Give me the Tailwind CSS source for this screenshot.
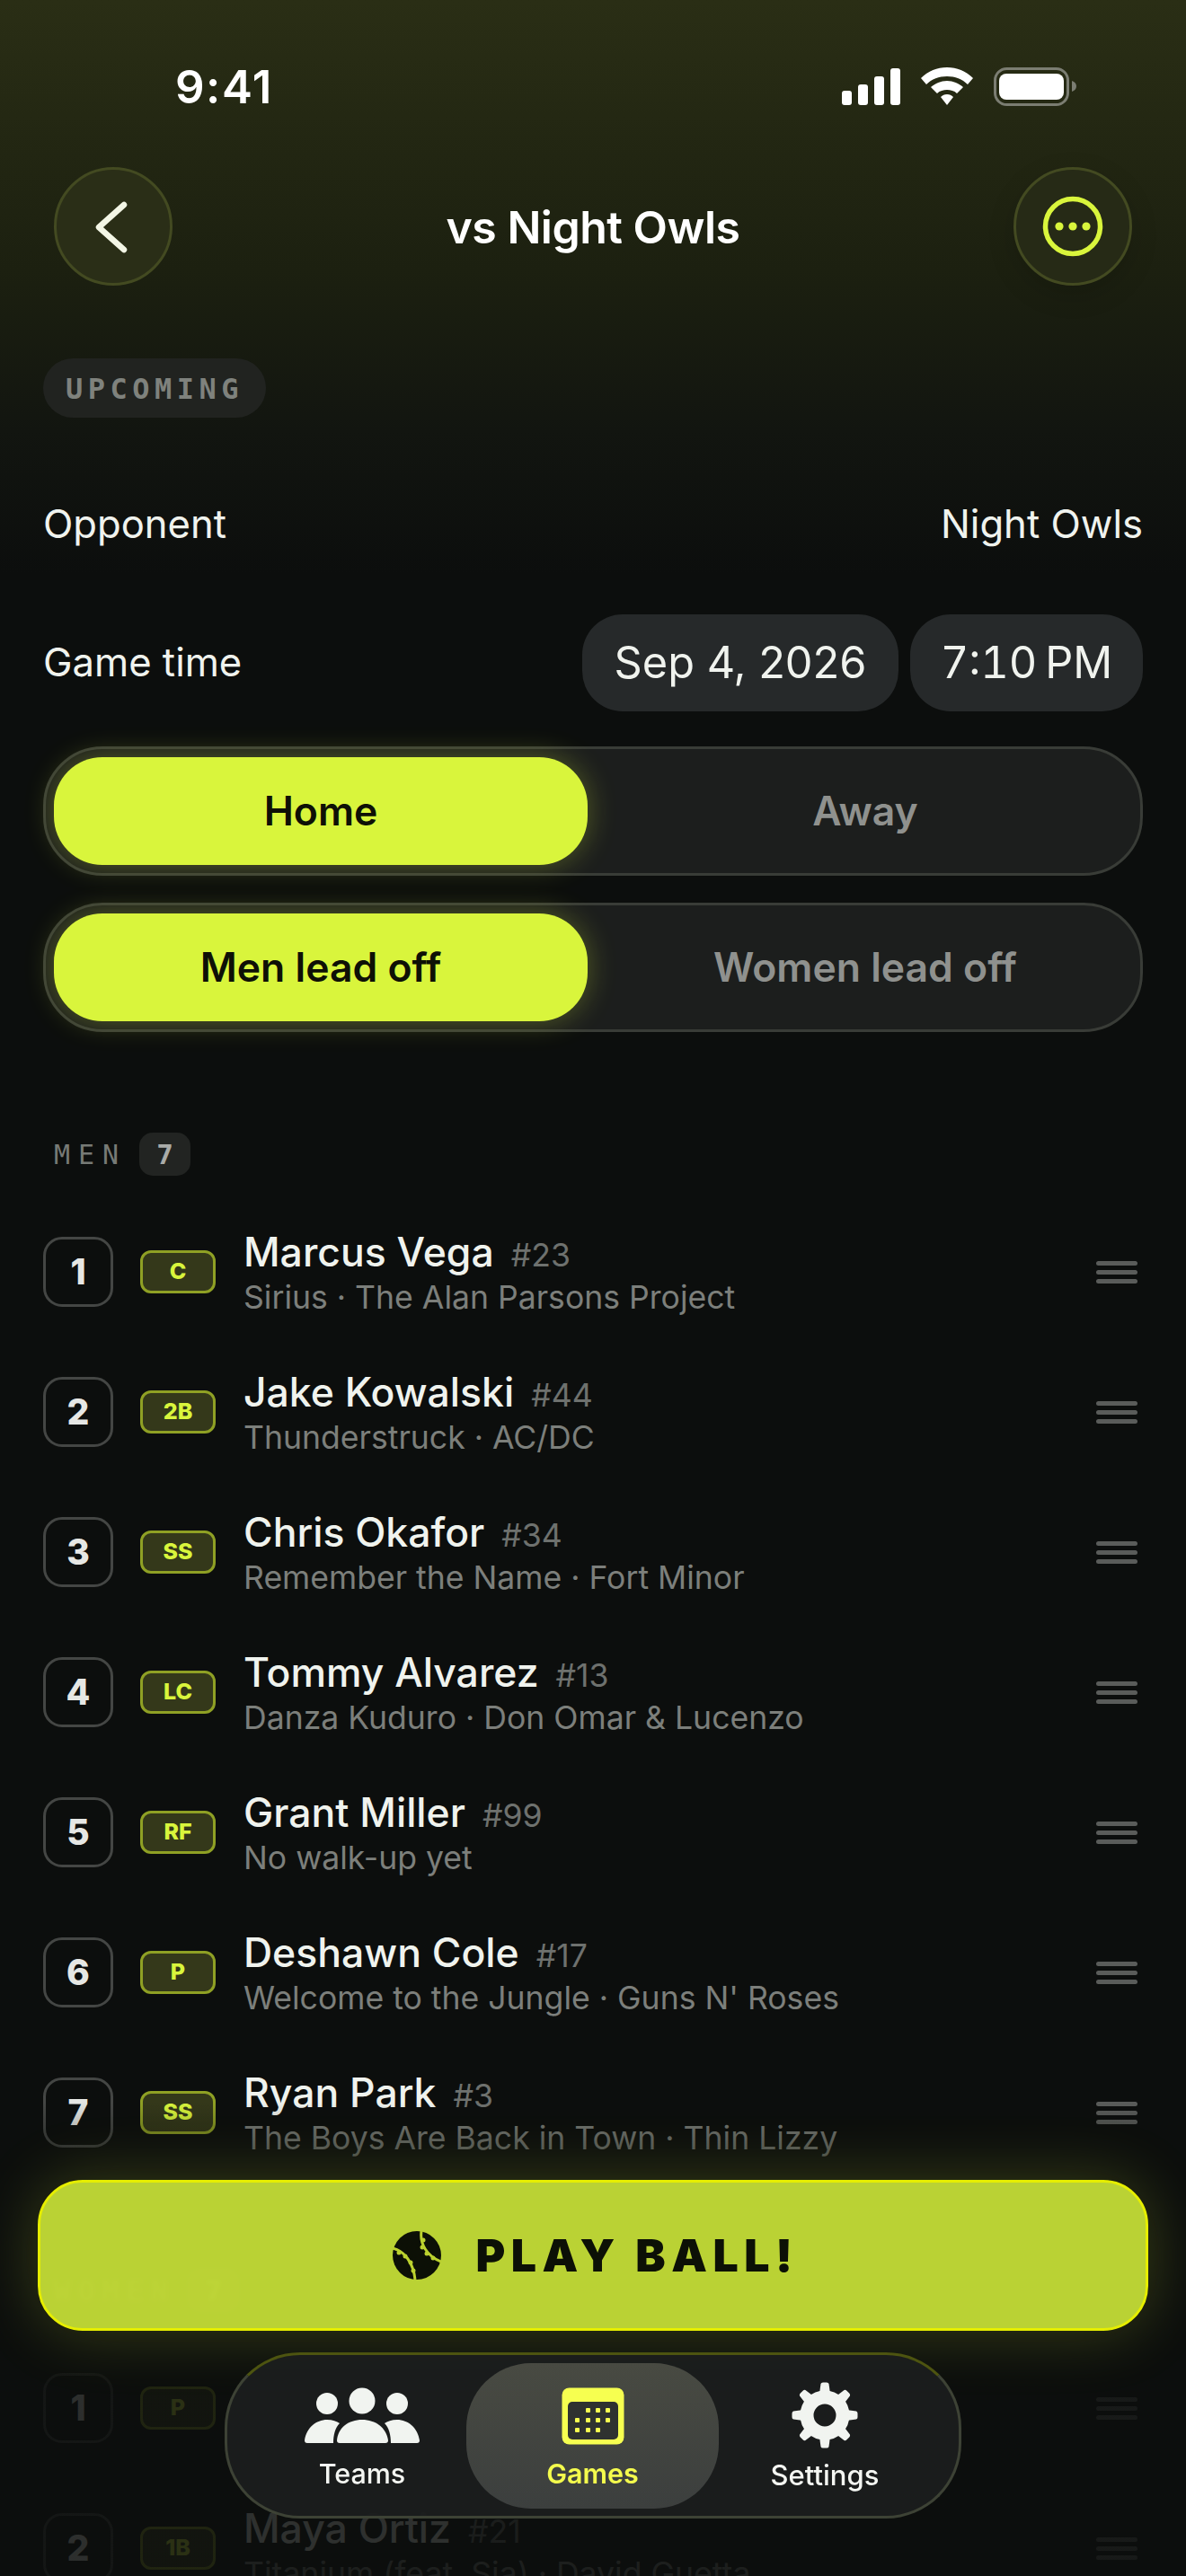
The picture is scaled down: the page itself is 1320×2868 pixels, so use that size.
<!DOCTYPE html>
<html><head><meta charset="utf-8">
<script src="https://cdn.jsdelivr.net/npm/@tailwindcss/browser@4"></script>
</head>
<body class="m-0 bg-[#0c0e0d]">
<div class="relative w-[1320px] h-[2868px] overflow-hidden bg-[linear-gradient(180deg,#2a2e15_0px,#1c2010_300px,#121510_480px,#0c0e0d_640px)] font-['Inter',sans-serif] text-[#f0f3ee]">
  <!-- status bar -->
  <div class="h-[186px] pt-[73px] pl-[195px] pr-[122px] flex justify-between items-start">
    <span class="text-[51px] leading-[48px] font-semibold text-white tracking-[1.500px]">9:41</span>
    <svg width="262" height="44" viewBox="0 0 262 44" class="mt-[2px]">
      <g fill="#fff"><rect x="1" y="26" width="11" height="16" rx="3"/><rect x="19" y="19" width="11" height="23" rx="3"/><rect x="37" y="10" width="11" height="32" rx="3"/><rect x="55" y="1" width="11" height="41" rx="3"/>
      <path d="M118 0C107 0 97 4 89 12L95 19C101 13 109 10 118 10C127 10 135 13 141 19L147 12C139 4 129 0 118 0Z"/><path d="M118 15C111 15 105 18 100 22L107 29C110 26 114 25 118 25C122 25 126 26 129 29L136 22C131 18 125 15 118 15Z"/><path d="M118 30C115 30 113 31 111 33L118 42L125 33C123 31 121 30 118 30Z"/></g>
      <rect x="171.500" y="1.500" width="81" height="40" rx="13" fill="none" stroke="#7b7d72" stroke-width="3"/><rect x="176" y="7" width="72" height="29" rx="8" fill="#fff"/><path d="M257 15C260 16 262 18 262 21C262 24 260 26 257 27Z" fill="#7b7d72"/>
    </svg>
  </div>
  <!-- header -->
  <div class="h-[132px] px-[60px] flex items-center justify-between">
    <button class="w-[132px] h-[132px] rounded-full bg-[#2a2e17] border-[3px] border-[#434a21] flex items-center justify-center">
      <svg width="40" height="60" viewBox="0 0 40 60" class="mt-[2px]"><path d="M32 5L4 30L32 55" fill="none" stroke="#f3f6e6" stroke-width="6.500" stroke-linecap="round" stroke-linejoin="round"/></svg>
    </button>
    <h1 class="text-[50px] font-semibold text-white tracking-[-0.500px] pt-[2px]">vs Night Owls</h1>
    <button class="w-[132px] h-[132px] rounded-full bg-[#262a16] border-[3px] border-[#434a21] flex items-center justify-center shadow-[0_10px_30px_rgba(0,0,0,0.15)]">
      <svg width="70" height="70" viewBox="0 0 70 70"><circle cx="35" cy="35" r="30.500" fill="none" stroke="#d9f53c" stroke-width="5.500"/><circle cx="20" cy="35" r="4.600" fill="#d9f53c"/><circle cx="35" cy="35" r="4.600" fill="#d9f53c"/><circle cx="50" cy="35" r="4.600" fill="#d9f53c"/></svg>
    </button>
  </div>
  <div class="px-[48px]">
    <div class="mt-[81px] w-[248px] h-[66px] rounded-[33px] bg-[#212320] flex items-center justify-center pt-[1px] font-['DejaVu_Sans_Mono',monospace] font-bold text-[32px] tracking-[5.500px] text-[#7f827d]">UPCOMING</div>
    <div class="mt-[87px] flex items-center justify-between h-[64px] text-[43.600px] text-[#f0f3ee]"><span>Opponent</span><span>Night Owls</span></div>
    <div class="mt-[68px] flex items-center justify-between h-[108px] text-[43.600px]">
      <span>Game time</span>
      <div class="flex gap-[13px]">
        <span class="h-[108px] w-[352px] rounded-[45px] bg-[#26292a] flex items-center justify-center text-[48.700px]">Sep 4, 2026</span>
        <span class="h-[108px] w-[259px] rounded-[45px] bg-[#26292a] flex items-center justify-center text-[48.700px] tabular-nums">7:10&#8239;PM</span>
      </div>
    </div>
    <div class="mt-[39px] h-[144px] rounded-[66px] bg-[#1c1e1d] border-[3px] border-[#393c37] p-[9px] flex items-center text-[44.500px] font-semibold">
      <span class="w-[594px] h-[120px] rounded-[54px] bg-[#d9f53c] text-[#0e1006] flex items-center justify-center shadow-[0_0_32px_rgba(217,245,60,0.3)]">Home</span>
      <span class="flex-1 -mr-[12px] text-center text-[#8f918e]">Away</span>
    </div>
    <div class="mt-[30px] h-[144px] rounded-[66px] bg-[#1c1e1d] border-[3px] border-[#393c37] p-[9px] flex items-center text-[44.500px] font-semibold">
      <span class="w-[594px] h-[120px] rounded-[54px] bg-[#d9f53c] text-[#0e1006] flex items-center justify-center shadow-[0_0_32px_rgba(217,245,60,0.3)]">Men lead off</span>
      <span class="flex-1 -mr-[12px] text-center text-[#8f918e]">Women lead off</span>
    </div>
    <!-- MEN -->
    <div class="mt-[112px] h-[48px] pl-[12px] flex items-center gap-[14px]">
      <span class="font-['DejaVu_Sans_Mono',monospace] text-[30px] tracking-[9px] text-[#777a76]">MEN</span>
      <span class="w-[57px] h-[48px] rounded-[15px] bg-[#222422] flex items-center justify-center font-['DejaVu_Sans_Mono',monospace] font-bold text-[31px] text-[#a9aba8]">7</span>
    </div>
    <div class="mt-[29px]">
      <div class="h-[156px] flex items-center">
        <span class="w-[78px] h-[78px] rounded-[21px] border-[3px] border-[#444644] flex items-center justify-center text-[39px] font-extrabold text-[#e6e7e4]">1</span>
        <span class="ml-[30px] w-[84px] h-[48px] rounded-[12px] border-[3px] border-[#8fa024] bg-[#34381a] flex items-center justify-center font-extrabold text-[25px] text-[#d9f53c]">C</span>
        <div class="ml-[31px] flex-1 flex flex-col">
          <div class="flex items-baseline gap-[19px] h-[56px]"><span class="text-[44.500px] leading-[58px] font-medium">Marcus Vega</span><span class="text-[35.600px] leading-[58px] text-[#6e716e]">#23</span></div>
          <div class="text-[35.600px] leading-[46px] pt-[1px] text-[#7c7f7b]">Sirius · The Alan Parsons Project</div>
        </div>
        <span class="mr-[6px] w-[46px] flex flex-col gap-[5px]"><i class="block h-[5px] rounded-sm bg-[#5a5c5a]"></i><i class="block h-[5px] rounded-sm bg-[#5a5c5a]"></i><i class="block h-[5px] rounded-sm bg-[#5a5c5a]"></i></span>
      </div>
      <div class="h-[156px] flex items-center">
        <span class="w-[78px] h-[78px] rounded-[21px] border-[3px] border-[#444644] flex items-center justify-center text-[39px] font-extrabold text-[#e6e7e4]">2</span>
        <span class="ml-[30px] w-[84px] h-[48px] rounded-[12px] border-[3px] border-[#8fa024] bg-[#34381a] flex items-center justify-center font-extrabold text-[25px] text-[#d9f53c]">2B</span>
        <div class="ml-[31px] flex-1 flex flex-col">
          <div class="flex items-baseline gap-[19px] h-[56px]"><span class="text-[44.500px] leading-[58px] font-medium">Jake Kowalski</span><span class="text-[35.600px] leading-[58px] text-[#6e716e]">#44</span></div>
          <div class="text-[35.600px] leading-[46px] pt-[1px] text-[#7c7f7b]">Thunderstruck · AC/DC</div>
        </div>
        <span class="mr-[6px] w-[46px] flex flex-col gap-[5px]"><i class="block h-[5px] rounded-sm bg-[#5a5c5a]"></i><i class="block h-[5px] rounded-sm bg-[#5a5c5a]"></i><i class="block h-[5px] rounded-sm bg-[#5a5c5a]"></i></span>
      </div>
      <div class="h-[156px] flex items-center">
        <span class="w-[78px] h-[78px] rounded-[21px] border-[3px] border-[#444644] flex items-center justify-center text-[39px] font-extrabold text-[#e6e7e4]">3</span>
        <span class="ml-[30px] w-[84px] h-[48px] rounded-[12px] border-[3px] border-[#8fa024] bg-[#34381a] flex items-center justify-center font-extrabold text-[25px] text-[#d9f53c]">SS</span>
        <div class="ml-[31px] flex-1 flex flex-col">
          <div class="flex items-baseline gap-[19px] h-[56px]"><span class="text-[44.500px] leading-[58px] font-medium">Chris Okafor</span><span class="text-[35.600px] leading-[58px] text-[#6e716e]">#34</span></div>
          <div class="text-[35.600px] leading-[46px] pt-[1px] text-[#7c7f7b]">Remember the Name · Fort Minor</div>
        </div>
        <span class="mr-[6px] w-[46px] flex flex-col gap-[5px]"><i class="block h-[5px] rounded-sm bg-[#5a5c5a]"></i><i class="block h-[5px] rounded-sm bg-[#5a5c5a]"></i><i class="block h-[5px] rounded-sm bg-[#5a5c5a]"></i></span>
      </div>
      <div class="h-[156px] flex items-center">
        <span class="w-[78px] h-[78px] rounded-[21px] border-[3px] border-[#444644] flex items-center justify-center text-[39px] font-extrabold text-[#e6e7e4]">4</span>
        <span class="ml-[30px] w-[84px] h-[48px] rounded-[12px] border-[3px] border-[#8fa024] bg-[#34381a] flex items-center justify-center font-extrabold text-[25px] text-[#d9f53c]">LC</span>
        <div class="ml-[31px] flex-1 flex flex-col">
          <div class="flex items-baseline gap-[19px] h-[56px]"><span class="text-[44.500px] leading-[58px] font-medium">Tommy Alvarez</span><span class="text-[35.600px] leading-[58px] text-[#6e716e]">#13</span></div>
          <div class="text-[35.600px] leading-[46px] pt-[1px] text-[#7c7f7b]">Danza Kuduro · Don Omar &amp; Lucenzo</div>
        </div>
        <span class="mr-[6px] w-[46px] flex flex-col gap-[5px]"><i class="block h-[5px] rounded-sm bg-[#5a5c5a]"></i><i class="block h-[5px] rounded-sm bg-[#5a5c5a]"></i><i class="block h-[5px] rounded-sm bg-[#5a5c5a]"></i></span>
      </div>
      <div class="h-[156px] flex items-center">
        <span class="w-[78px] h-[78px] rounded-[21px] border-[3px] border-[#444644] flex items-center justify-center text-[39px] font-extrabold text-[#e6e7e4]">5</span>
        <span class="ml-[30px] w-[84px] h-[48px] rounded-[12px] border-[3px] border-[#8fa024] bg-[#34381a] flex items-center justify-center font-extrabold text-[25px] text-[#d9f53c]">RF</span>
        <div class="ml-[31px] flex-1 flex flex-col">
          <div class="flex items-baseline gap-[19px] h-[56px]"><span class="text-[44.500px] leading-[58px] font-medium">Grant Miller</span><span class="text-[35.600px] leading-[58px] text-[#6e716e]">#99</span></div>
          <div class="text-[35.600px] leading-[46px] pt-[1px] text-[#7c7f7b]">No walk-up yet</div>
        </div>
        <span class="mr-[6px] w-[46px] flex flex-col gap-[5px]"><i class="block h-[5px] rounded-sm bg-[#5a5c5a]"></i><i class="block h-[5px] rounded-sm bg-[#5a5c5a]"></i><i class="block h-[5px] rounded-sm bg-[#5a5c5a]"></i></span>
      </div>
      <div class="h-[156px] flex items-center">
        <span class="w-[78px] h-[78px] rounded-[21px] border-[3px] border-[#444644] flex items-center justify-center text-[39px] font-extrabold text-[#e6e7e4]">6</span>
        <span class="ml-[30px] w-[84px] h-[48px] rounded-[12px] border-[3px] border-[#8fa024] bg-[#34381a] flex items-center justify-center font-extrabold text-[25px] text-[#d9f53c]">P</span>
        <div class="ml-[31px] flex-1 flex flex-col">
          <div class="flex items-baseline gap-[19px] h-[56px]"><span class="text-[44.500px] leading-[58px] font-medium">Deshawn Cole</span><span class="text-[35.600px] leading-[58px] text-[#6e716e]">#17</span></div>
          <div class="text-[35.600px] leading-[46px] pt-[1px] text-[#7c7f7b]">Welcome to the Jungle · Guns N' Roses</div>
        </div>
        <span class="mr-[6px] w-[46px] flex flex-col gap-[5px]"><i class="block h-[5px] rounded-sm bg-[#5a5c5a]"></i><i class="block h-[5px] rounded-sm bg-[#5a5c5a]"></i><i class="block h-[5px] rounded-sm bg-[#5a5c5a]"></i></span>
      </div>
      <div class="h-[156px] flex items-center">
        <span class="w-[78px] h-[78px] rounded-[21px] border-[3px] border-[#444644] flex items-center justify-center text-[39px] font-extrabold text-[#e6e7e4]">7</span>
        <span class="ml-[30px] w-[84px] h-[48px] rounded-[12px] border-[3px] border-[#8fa024] bg-[#34381a] flex items-center justify-center font-extrabold text-[25px] text-[#d9f53c]">SS</span>
        <div class="ml-[31px] flex-1 flex flex-col">
          <div class="flex items-baseline gap-[19px] h-[56px]"><span class="text-[44.500px] leading-[58px] font-medium">Ryan Park</span><span class="text-[35.600px] leading-[58px] text-[#6e716e]">#3</span></div>
          <div class="text-[35.600px] leading-[46px] pt-[1px] text-[#7c7f7b]">The Boys Are Back in Town · Thin Lizzy</div>
        </div>
        <span class="mr-[6px] w-[46px] flex flex-col gap-[5px]"><i class="block h-[5px] rounded-sm bg-[#5a5c5a]"></i><i class="block h-[5px] rounded-sm bg-[#5a5c5a]"></i><i class="block h-[5px] rounded-sm bg-[#5a5c5a]"></i></span>
      </div>
    </div>
    <!-- WOMEN -->
    <div class="mt-[96px] h-[48px] pl-[12px] flex items-center gap-[14px]">
      <span class="font-['DejaVu_Sans_Mono',monospace] text-[30px] tracking-[9px] text-[#777a76]">WOMEN</span>
      <span class="w-[57px] h-[48px] rounded-[15px] bg-[#222422] flex items-center justify-center font-['DejaVu_Sans_Mono',monospace] font-bold text-[31px] text-[#a9aba8]">7</span>
    </div>
    <div class="mt-[29px]">
      <div class="h-[156px] flex items-center">
        <span class="w-[78px] h-[78px] rounded-[21px] border-[3px] border-[#444644] flex items-center justify-center text-[39px] font-extrabold text-[#e6e7e4]">1</span>
        <span class="ml-[30px] w-[84px] h-[48px] rounded-[12px] border-[3px] border-[#8fa024] bg-[#34381a] flex items-center justify-center font-extrabold text-[25px] text-[#d9f53c]">P</span>
        <div class="ml-[31px] flex-1"></div>
        <span class="mr-[6px] w-[46px] flex flex-col gap-[5px]"><i class="block h-[5px] rounded-sm bg-[#5a5c5a]"></i><i class="block h-[5px] rounded-sm bg-[#5a5c5a]"></i><i class="block h-[5px] rounded-sm bg-[#5a5c5a]"></i></span>
      </div>
      <div class="h-[156px] flex items-center">
        <span class="w-[78px] h-[78px] rounded-[21px] border-[3px] border-[#444644] flex items-center justify-center text-[39px] font-extrabold text-[#e6e7e4]">2</span>
        <span class="ml-[30px] w-[84px] h-[48px] rounded-[12px] border-[3px] border-[#8fa024] bg-[#34381a] flex items-center justify-center font-extrabold text-[25px] text-[#d9f53c]">1B</span>
        <div class="ml-[31px] flex-1 flex flex-col">
          <div class="flex items-baseline gap-[19px] h-[56px]"><span class="text-[44.500px] leading-[58px] font-medium">Maya Ortiz</span><span class="text-[35.600px] leading-[58px] text-[#6e716e]">#21</span></div>
          <div class="text-[35.600px] leading-[46px] pt-[1px] text-[#7c7f7b]">Titanium (feat. Sia) · David Guetta</div>
        </div>
        <span class="mr-[6px] w-[46px] flex flex-col gap-[5px]"><i class="block h-[5px] rounded-sm bg-[#5a5c5a]"></i><i class="block h-[5px] rounded-sm bg-[#5a5c5a]"></i><i class="block h-[5px] rounded-sm bg-[#5a5c5a]"></i></span>
      </div>
    </div>
  </div>

  <!-- bottom fade over the scrolling list -->
  <div class="absolute left-0 right-0 top-[2340px] bottom-0 bg-[linear-gradient(180deg,rgba(12,14,13,0)_0px,rgba(12,14,13,0.85)_120px,rgba(12,14,13,0.85)_100%)]"></div>

  <!-- play ball -->
  <button class="absolute left-[42px] top-[2427px] w-[1236px] h-[168px] rounded-[50px] border-[3px] border-[#e6ee00] bg-[#d9f53c]/85 backdrop-blur-[2px] shadow-[0_0_70px_rgba(217,245,60,0.22)] pl-[6px] flex items-center justify-center gap-[38px]">
    <svg width="54" height="54" viewBox="0 0 54 54"><circle cx="27" cy="27" r="27" fill="#0c1006"/><g fill="none" stroke="#bbd12f" stroke-width="3"><path d="M0 19C13 22 23 35 25 54"/><path d="M32 0C30 14 38 28 54 34"/></g><g fill="#bbd12f"><circle cx="7" cy="24" r="2.500"/><circle cx="14" cy="28" r="2.500"/><circle cx="20" cy="35" r="2.500"/><circle cx="23" cy="44" r="2.500"/><circle cx="34" cy="10" r="2.500"/><circle cx="33" cy="18" r="2.500"/><circle cx="38" cy="25" r="2.500"/><circle cx="45" cy="30" r="2.500"/></g></svg>
    <span class="text-[50px] font-black text-[#0c1006] tracking-[6.500px]">PLAY BALL!</span>
  </button>

  <!-- tab bar -->
  <nav class="absolute left-[250px] top-[2619px] w-[820px] h-[185px] rounded-[84px] border-[3px] border-[#3d4235] border-t-[#4d5410] bg-[#1b1e1d]/95 pl-[34px] flex items-center">
    <div class="w-[232px] pt-[8px] flex flex-col items-center">
      <svg width="130" height="64" viewBox="0 0 130 64"><g fill="#f1f4f0"><circle cx="65" cy="16" r="14.500"/><circle cx="26" cy="19" r="12"/><circle cx="104" cy="19" r="12"/><path d="M40 63Q37 63 37 60C38 46 50 37 65 37C80 37 92 46 94 60Q94 63 91 63Z"/><path d="M4 63Q1 63 1 60C3 46 14 37 26 37C32 37 37 39 40 41C35 46 33 54 33 63Z"/><path d="M126 63Q129 63 129 60C127 46 116 37 104 37C98 37 93 39 90 41C95 46 97 54 97 63Z"/></g></svg>
      <span class="mt-[13px] text-[30.500px] leading-[40px] font-medium text-[#f4f6f2]">Teams</span>
    </div>
    <div class="w-[281px] h-[162px] pt-[6px] rounded-[72px] bg-[linear-gradient(180deg,#484a42,#3c3f3e)] flex flex-col items-center justify-center">
      <svg width="70" height="64" viewBox="0 0 70 64" class="mt-[3px]"><rect x="0.500" y="0.500" width="69" height="63" rx="8" fill="#f6ff50"/><rect x="7" y="16" width="56" height="42" rx="5" fill="#2f3230"/><g fill="#f6ff50"><rect x="27" y="23" width="5" height="5" rx="1"/><rect x="38" y="23" width="5" height="5" rx="1"/><rect x="49" y="23" width="5" height="5" rx="1"/><rect x="15" y="34" width="5" height="5" rx="1"/><rect x="27" y="34" width="5" height="5" rx="1"/><rect x="38" y="34" width="5" height="5" rx="1"/><rect x="49" y="34" width="5" height="5" rx="1"/><rect x="15" y="45" width="5" height="5" rx="1"/><rect x="27" y="45" width="5" height="5" rx="1"/><rect x="38" y="45" width="5" height="5" rx="1"/></g></svg>
      <span class="mt-[12px] text-[30.500px] leading-[40px] font-semibold text-[#f4fb4d]">Games</span>
    </div>
    <div class="w-[236px] pt-[8px] flex flex-col items-center">
      <svg width="74" height="74" viewBox="-37 -37 74 74" class="-mt-[4px]"><g fill="#f1f4f0"><circle r="20" fill="none" stroke="#f1f4f0" stroke-width="15"/><path d="M-6 -24L-4.500 -35Q-4 -36.500 -2 -36.500L2 -36.500Q4 -36.500 4.500 -35L6 -24Z"/><path transform="rotate(45)" d="M-6 -24L-4.500 -35Q-4 -36.500 -2 -36.500L2 -36.500Q4 -36.500 4.500 -35L6 -24Z"/><path transform="rotate(90)" d="M-6 -24L-4.500 -35Q-4 -36.500 -2 -36.500L2 -36.500Q4 -36.500 4.500 -35L6 -24Z"/><path transform="rotate(135)" d="M-6 -24L-4.500 -35Q-4 -36.500 -2 -36.500L2 -36.500Q4 -36.500 4.500 -35L6 -24Z"/><path transform="rotate(180)" d="M-6 -24L-4.500 -35Q-4 -36.500 -2 -36.500L2 -36.500Q4 -36.500 4.500 -35L6 -24Z"/><path transform="rotate(225)" d="M-6 -24L-4.500 -35Q-4 -36.500 -2 -36.500L2 -36.500Q4 -36.500 4.500 -35L6 -24Z"/><path transform="rotate(270)" d="M-6 -24L-4.500 -35Q-4 -36.500 -2 -36.500L2 -36.500Q4 -36.500 4.500 -35L6 -24Z"/><path transform="rotate(315)" d="M-6 -24L-4.500 -35Q-4 -36.500 -2 -36.500L2 -36.500Q4 -36.500 4.500 -35L6 -24Z"/></g></svg>
      <span class="mt-[10px] text-[31px] leading-[40px] font-medium text-[#f4f6f2]">Settings</span>
    </div>
  </nav>
</div>
</body></html>
